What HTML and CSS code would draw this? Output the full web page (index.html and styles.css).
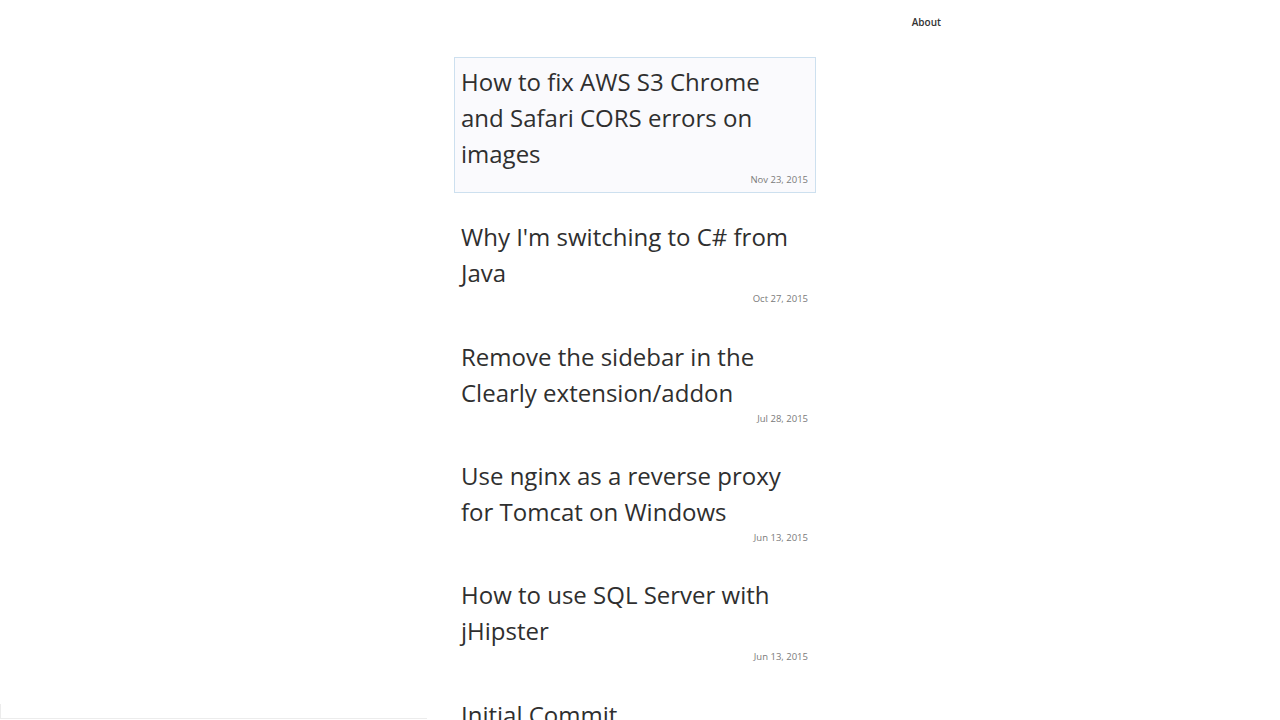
FILE: index.html
```html
<!DOCTYPE html>
<html>
<head>
<meta charset="utf-8">
<title>Blog</title>
<link rel="stylesheet" href="styles.css">
</head>
<body>
<div class="page">
  <header class="nav">
    <a class="nav-link" href="#">About</a>
  </header>
  <main class="posts">
    <a class="post post-active" href="#">
      <h2 class="post-title">How to fix AWS S3 Chrome and Safari CORS errors on images</h2>
      <div class="post-date">Nov 23, 2015</div>
    </a>
    <a class="post" href="#">
      <h2 class="post-title">Why I'm switching to C# from Java</h2>
      <div class="post-date">Oct 27, 2015</div>
    </a>
    <a class="post" href="#">
      <h2 class="post-title">Remove the sidebar in the Clearly extension/addon</h2>
      <div class="post-date">Jul 28, 2015</div>
    </a>
    <a class="post" href="#">
      <h2 class="post-title">Use nginx as a reverse proxy for Tomcat on Windows</h2>
      <div class="post-date">Jun 13, 2015</div>
    </a>
    <a class="post" href="#">
      <h2 class="post-title">How to use SQL Server with jHipster</h2>
      <div class="post-date">Jun 13, 2015</div>
    </a>
    <a class="post" href="#">
      <h2 class="post-title">Initial Commit</h2>
      <div class="post-date">Jun 12, 2015</div>
    </a>
  </main>
</div>
<div class="corner-bar"></div>
</body>
</html>
```
FILE: styles.css
```css
html, body {
  margin: 0;
  padding: 0;
  background: #ffffff;
  color: #333333;
  font-family: "Open Sans", "Liberation Sans", sans-serif;
}

.page {
  width: 1170px;
  margin: 0 auto;
}

.nav {
  display: flex;
  justify-content: flex-end;
  height: 57px;
  padding-right: 284px;
  box-sizing: border-box;
}

.nav-link {
  margin-top: 14px;
  font-size: 10px;
  font-weight: 600;
  line-height: 16px;
  color: #333333;
  text-decoration: none;
}

.posts {
  display: flex;
  flex-direction: column;
  gap: 19.33px;
  width: 362px;
  margin-left: 399px;
}

.post {
  display: block;
  border: 1px solid transparent;
  padding: 6px 7px 5px 6px;
  color: #333333;
  text-decoration: none;
}

.post-active {
  border-color: #cde0ef;
  background: #fafafd;
}

.post-title {
  margin: 0;
  font-size: 24px;
  font-weight: 400;
  line-height: 36px;
  color: #2f2f2f;
}

.post-date {
  padding-top: 1px;
  text-align: right;
  font-size: 9.5px;
  line-height: 14px;
  color: #7a7a7a;
}

.corner-bar {
  position: fixed;
  left: 0;
  bottom: 1px;
  width: 426px;
  height: 14px;
  border-left: 1px solid #ececec;
  border-bottom: 1px solid #ececec;
}
```
